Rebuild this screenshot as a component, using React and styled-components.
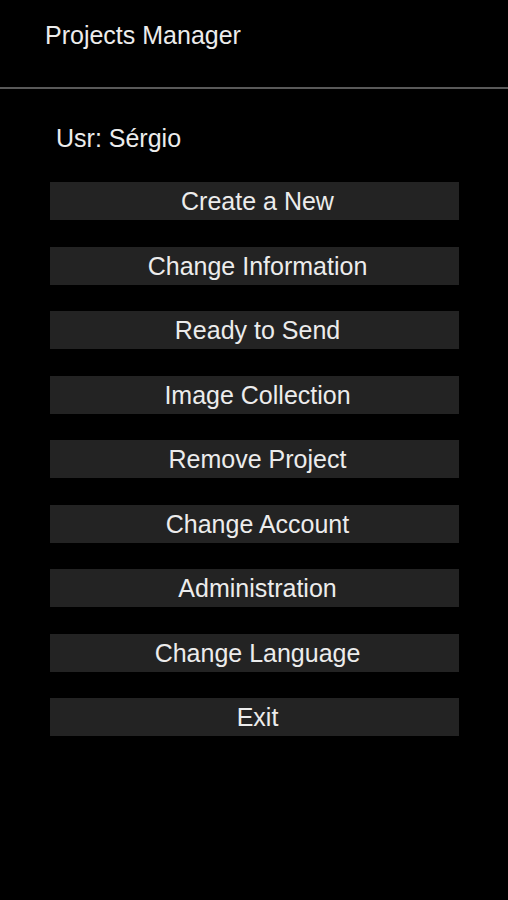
import React from 'react'
import styled, { createGlobalStyle } from 'styled-components'

const GlobalStyle = createGlobalStyle`
  html, body {
    margin: 0;
    padding: 0;
    background: #000;
  }
  body {
    font-family: "Liberation Sans", Arial, sans-serif;
    color: #e8e8e8;
  }
`

const Screen = styled.div`
  width: 508px;
  min-height: 900px;
  background: #000;
`

const Header = styled.header`
  box-sizing: border-box;
  height: 89px;
  padding: 21px 0 0 45px;
  border-bottom: 2px solid #595959;
`

const Title = styled.h1`
  margin: 0;
  font-size: 25px;
  font-weight: normal;
  line-height: 29px;
  color: #ececec;
`

const Content = styled.main`
  padding: 35px 49px 0 50px;
  display: flex;
  flex-direction: column;
`

const User = styled.div`
  font-size: 25px;
  line-height: 29px;
  margin-left: 6px;
  margin-bottom: 29px;
  color: #ececec;
`

const Menu = styled.div`
  display: flex;
  flex-direction: column;
  gap: 26.5px;
`

const MenuButton = styled.button`
  height: 38px;
  width: 100%;
  border: none;
  background: #232323;
  color: #ececec;
  font-family: "Liberation Sans", Arial, sans-serif;
  font-size: 25px;
  line-height: 38px;
  padding: 0 0 0 6px;
  text-align: center;
  cursor: pointer;
`

const items = [
  'Create a New',
  'Change Information',
  'Ready to Send',
  'Image Collection',
  'Remove Project',
  'Change Account',
  'Administration',
  'Change Language',
  'Exit',
]

export default function App() {
  return (
    <Screen>
      <GlobalStyle />
      <Header>
        <Title>Projects Manager</Title>
      </Header>
      <Content>
        <User>Usr: Sérgio</User>
        <Menu>
          {items.map((label) => (
            <MenuButton key={label}>{label}</MenuButton>
          ))}
        </Menu>
      </Content>
    </Screen>
  )
}
